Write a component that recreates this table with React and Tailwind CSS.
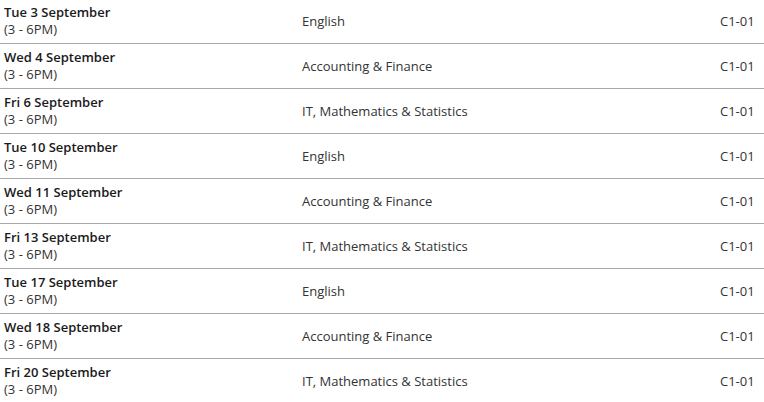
const sessions = [
  { date: 'Tue 3 September', subject: 'English' },
  { date: 'Wed 4 September', subject: 'Accounting & Finance' },
  { date: 'Fri 6 September', subject: 'IT, Mathematics & Statistics' },
  { date: 'Tue 10 September', subject: 'English' },
  { date: 'Wed 11 September', subject: 'Accounting & Finance' },
  { date: 'Fri 13 September', subject: 'IT, Mathematics & Statistics' },
  { date: 'Tue 17 September', subject: 'English' },
  { date: 'Wed 18 September', subject: 'Accounting & Finance' },
  { date: 'Fri 20 September', subject: 'IT, Mathematics & Statistics' },
];

export default function App() {
  return (
    <div className="w-[764px] h-[402px] overflow-hidden bg-white font-['Open_Sans',sans-serif] text-[13px] text-[#333]">
      <div className="-mt-[1px]">
        {sessions.map((s) => (
          <div
            key={s.date}
            className="grid grid-cols-[302px_418px_1fr] items-center h-[45px] border-b border-[#aaaaaa]"
          >
            <div className="pl-[4px] leading-[17px]">
              <div className="font-semibold text-[#1a1a1a]">{s.date}</div>
              <div>(3 - 6PM)</div>
            </div>
            <div className="pt-[1px]">{s.subject}</div>
            <div className="pt-[1px]">C1-01</div>
          </div>
        ))}
      </div>
    </div>
  );
}
